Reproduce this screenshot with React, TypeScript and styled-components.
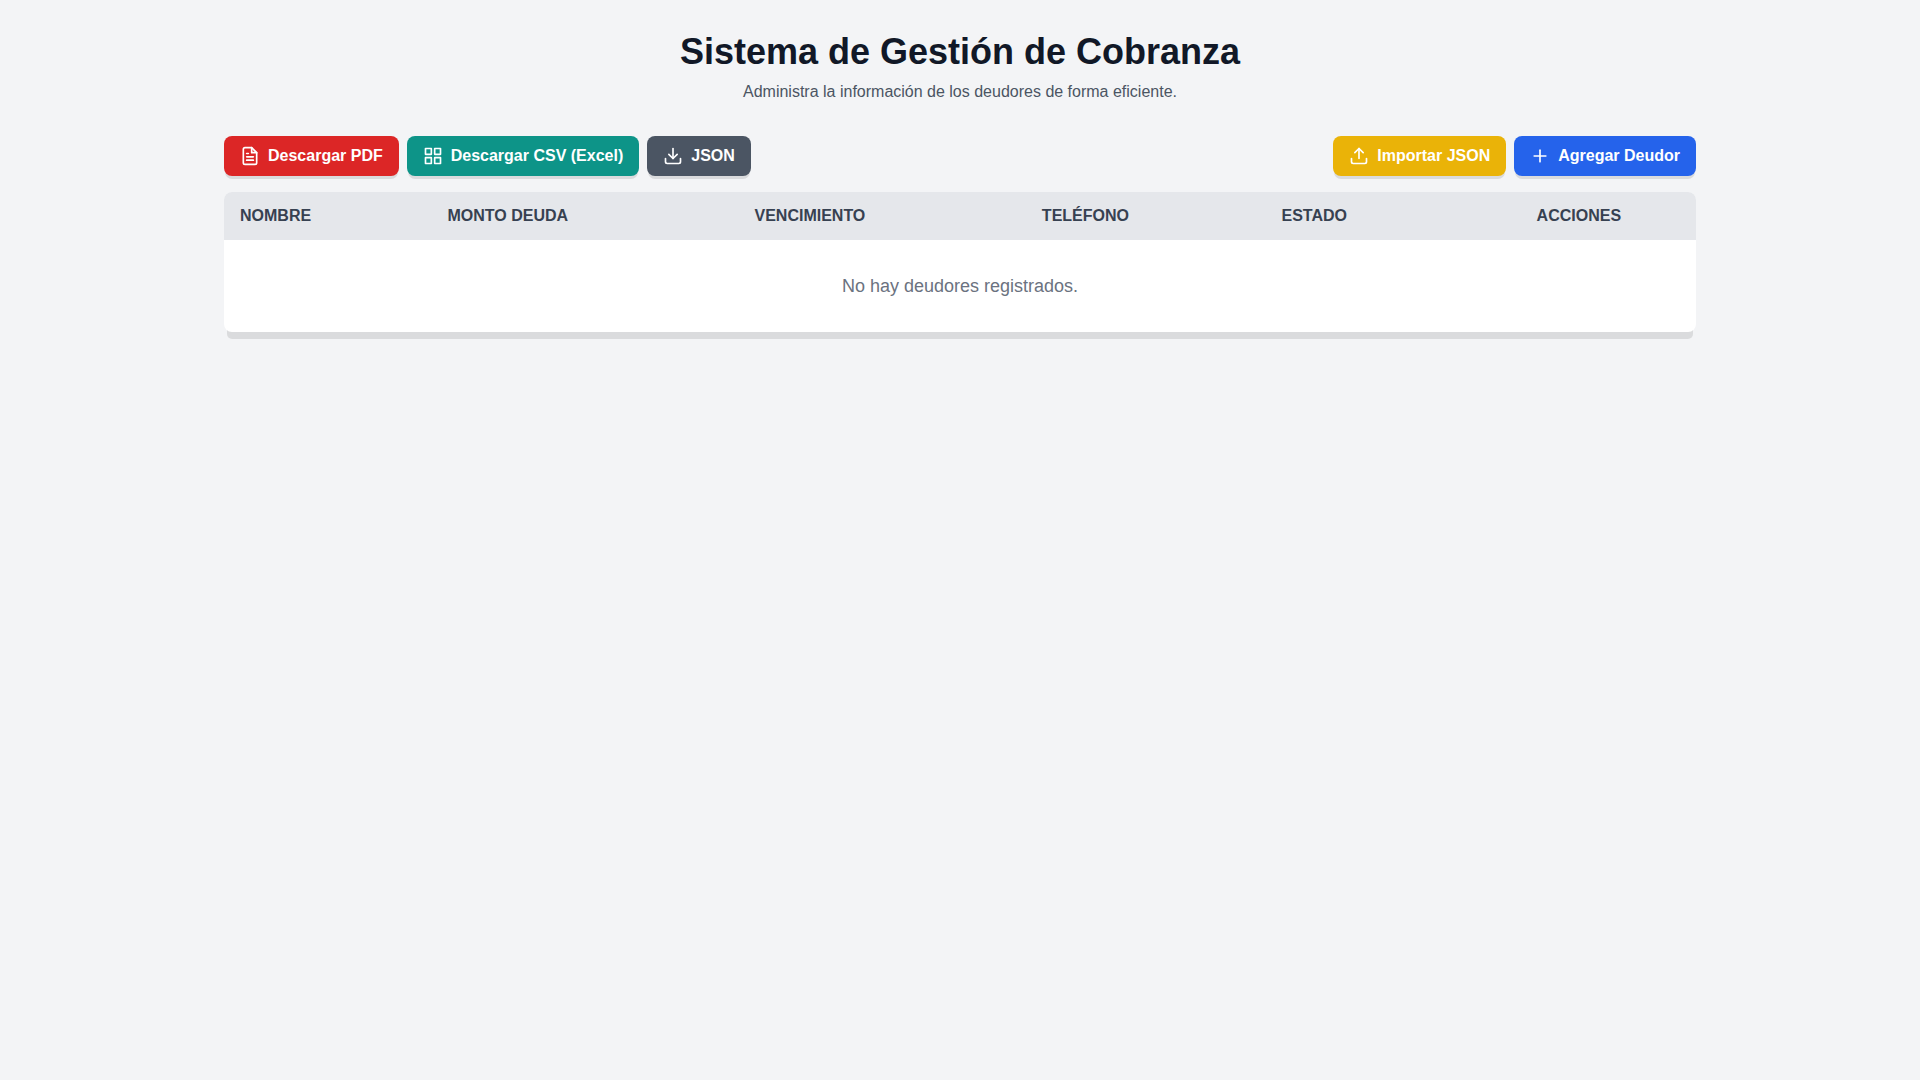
import React from "react";
import styled, { createGlobalStyle } from "styled-components";
import { FiDownload, FiFileText, FiGrid, FiPlus, FiUpload } from "react-icons/fi";

const GlobalStyle = createGlobalStyle`
  *, *::before, *::after {
    box-sizing: border-box;
  }
  body {
    margin: 0;
    background: #f3f4f6;
    color: #111827;
    font-family: Arial, "Liberation Sans", sans-serif;
    font-size: 16px;
    line-height: 24px;
    text-rendering: optimizeSpeed;
  }
`;

const Page = styled.main`
  max-width: 1536px;
  margin: 0 auto;
  padding: 32px;
`;

const Header = styled.header`
  margin-bottom: 32px;
  text-align: center;
`;

const Title = styled.h1`
  margin: 0;
  font-size: 36px;
  line-height: 40px;
  font-weight: 700;
`;

const Subtitle = styled.p`
  margin: 8px 0 0;
  color: #4b5563;
`;

const Toolbar = styled.div`
  display: flex;
  flex-wrap: wrap;
  justify-content: space-between;
  gap: 16px;
  margin-bottom: 16px;
`;

const ButtonGroup = styled.div`
  display: flex;
  flex-wrap: wrap;
  gap: 8px;
`;

const Button = styled.button<{ $color: string }>`
  display: flex;
  align-items: center;
  gap: 8px;
  padding: 8px 16px;
  border: 0;
  border-radius: 8px;
  background: ${({ $color }) => $color};
  color: #ffffff;
  font: inherit;
  font-weight: 700;
  text-rendering: inherit;
  cursor: pointer;
  box-shadow: 0 4px 0 -1px rgba(0, 0, 0, 0.1);

  svg {
    width: 20px;
    height: 20px;
    flex-shrink: 0;
  }
`;

const Card = styled.section`
  overflow: hidden;
  border-radius: 8px;
  background: #ffffff;
  box-shadow: 0 10px 0 -3px rgba(0, 0, 0, 0.1);
`;

const Table = styled.table`
  width: 100%;
  border-collapse: collapse;
`;

const HeadCell = styled.th<{ $align?: "left" | "center" }>`
  padding: 12px 16px;
  background: #e5e7eb;
  color: #374151;
  font-weight: 700;
  text-align: ${({ $align = "left" }) => $align};
  text-transform: uppercase;
`;

const EmptyCell = styled.td`
  padding: 32px;
  color: #6b7280;
  font-size: 18px;
  line-height: 28px;
  text-align: center;
`;

const columns = ["Nombre", "Monto Deuda", "Vencimiento", "Teléfono", "Estado"];

export default function App() {
  return (
    <>
      <GlobalStyle />
      <Page>
        <Header>
          <Title>Sistema de Gestión de Cobranza</Title>
          <Subtitle>Administra la información de los deudores de forma eficiente.</Subtitle>
        </Header>
        <Toolbar>
          <ButtonGroup>
            <Button type="button" $color="#dc2626">
              <FiFileText aria-hidden />
              Descargar PDF
            </Button>
            <Button type="button" $color="#0d9488">
              <FiGrid aria-hidden />
              Descargar CSV (Excel)
            </Button>
            <Button type="button" $color="#4b5563">
              <FiDownload aria-hidden />
              JSON
            </Button>
          </ButtonGroup>
          <ButtonGroup>
            <Button type="button" $color="#eab308">
              <FiUpload aria-hidden />
              Importar JSON
            </Button>
            <Button type="button" $color="#2563eb">
              <FiPlus aria-hidden />
              Agregar Deudor
            </Button>
          </ButtonGroup>
        </Toolbar>
        <Card>
          <Table>
            <thead>
              <tr>
                {columns.map((column) => (
                  <HeadCell key={column} scope="col">
                    {column}
                  </HeadCell>
                ))}
                <HeadCell scope="col" $align="center">
                  Acciones
                </HeadCell>
              </tr>
            </thead>
            <tbody>
              <tr>
                <EmptyCell colSpan={6}>No hay deudores registrados.</EmptyCell>
              </tr>
            </tbody>
          </Table>
        </Card>
      </Page>
    </>
  );
}
